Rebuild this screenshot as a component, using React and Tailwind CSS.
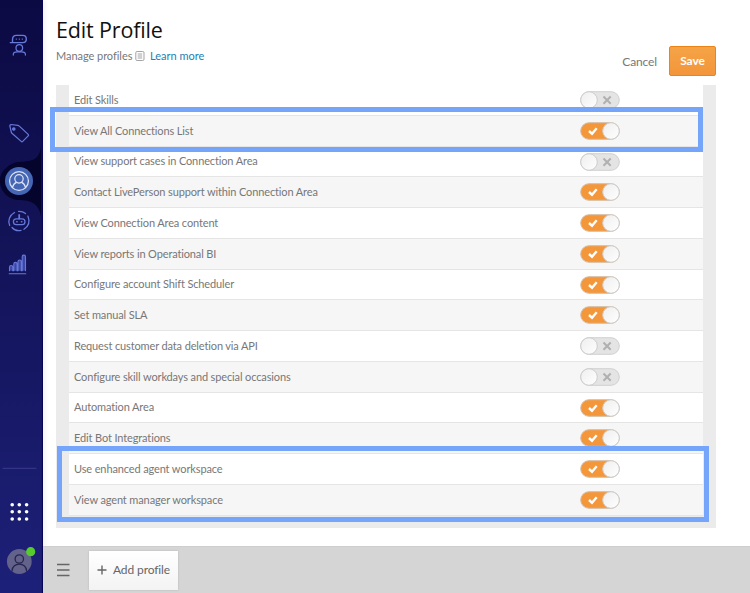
const permissions = [
  ['Edit Skills', false],
  ['View All Connections List', true],
  ['View support cases in Connection Area', false],
  ['Contact LivePerson support within Connection Area', true],
  ['View Connection Area content', true],
  ['View reports in Operational BI', true],
  ['Configure account Shift Scheduler', true],
  ['Set manual SLA', true],
  ['Request customer data deletion via API', false],
  ['Configure skill workdays and special occasions', false],
  ['Automation Area', true],
  ['Edit Bot Integrations', true],
  ['Use enhanced agent workspace', true],
  ['View agent manager workspace', true],
];

function Toggle({ on }) {
  return (
    <svg width="40" height="18" viewBox="0 0 40 18" className="block shrink-0">
      <defs>
        <linearGradient id="knob" x1="0" y1="0" x2="1" y2="1">
          <stop offset="0" stopColor="#eeeeee" />
          <stop offset="1" stopColor="#ffffff" />
        </linearGradient>
      </defs>
      <rect x="0.7" y="0.7" width="38.6" height="16.6" rx="8.3" fill={on ? '#f4973a' : '#e4e4e4'} stroke={on ? '#d4bda5' : '#d0d0d0'} />
      <circle cx={on ? 31 : 9} cy="9" r="8.3" fill="url(#knob)" stroke="#cdcdcd" />
      {on ? (
        <path d="M9 9l3 2.7 4.7-5.5" fill="none" stroke="#fff" strokeWidth="2.4" />
      ) : (
        <path d="M23.5 5.5l7.2 7.2M30.7 5.5l-7.2 7.2" fill="none" stroke="#b0b0b0" strokeWidth="2" />
      )}
    </svg>
  );
}

function Sidebar() {
  return (
    <nav className="h-full w-[43px] shrink-0 bg-linear-to-b from-[#0c0a43] to-[#1d2078] shadow-[2px_0_5px_rgba(0,0,0,0.06)]">
      <svg width="43" height="593" viewBox="0 0 43 593" fill="none" stroke="#6678d8" strokeWidth="1.25" strokeLinecap="round" strokeLinejoin="round">
        <path d="M42.5 0V593" stroke="#080557" />
        <path d="M41 147C39 161 31 161 20 162C11 162 0 170 0 181C0 192 9 200 20 200C31 200 39 204 41 216Z" fill="#04042c" stroke="none" />
        <g>
          <path d="M10.3 42.6h12.4c4.8 0 4.8-7.2 0-7.2h-6.4c-3.2 0-3.8 2-3.8 4.4v2.6" strokeWidth="1.4" />
          <path d="M16.2 39h.2M19.2 39h.2M22.2 39h.2" />
          <circle cx="19.3" cy="48" r="3.3" />
          <path d="M13.3 55v-.6c0-2 1.2-2.6 3.8-2.6h4.6c2.6 0 3.7.6 3.7 2.6v.6" />
        </g>
        <path d="M9.8 125.8c0-.8.5-1.3 1.3-1.3l6.8.8c.7.1 1 .4 1.4.8l8.9 8.3c.5.5.5 1 0 1.5l-5.5 5.5c-.5.5-1 .5-1.5 0l-9-7.9c-.5-.4-.8-.8-.9-1.4Z" />
        <circle cx="13.8" cy="129" r="1.2" fill="#6678d8" />
        <circle cx="19" cy="181" r="14" fill="#4566b5" stroke="none" />
        <g stroke="#dce4f5">
          <circle cx="19" cy="181" r="9.4" />
          <circle cx="19" cy="178.8" r="4.2" />
          <path d="M12.4 187.6c.8-3 2.1-4.4 4-5.2M25.6 187.6c-.8-3-2.1-4.4-4-5.2" />
        </g>
        <g>
          <path d="M14.5 212.5c-5 2.8-7 8-4.8 13M12 227.5c2.5 3 6 3.5 9 2.9M24 229.3c4.8-3 6-8 3.9-13.2M25.5 213.5c-2-1.7-4.5-2.3-7-2.2" />
          <rect x="13.4" y="218.8" width="11.6" height="5.8" rx="2.9" />
          <path d="M19.2 218.5v-3.5" strokeWidth="1.8" />
          <path d="M16.8 221.7h.3M21.5 221.7h.3" strokeWidth="1.6" />
        </g>
        <g strokeWidth="1.1">
          <path d="M9.2 273.7h16.5" />
          <g fill="#3c47a5">
            <path d="M9.5 270.8v-3.6c0-2.2 3.3-2.2 3.3 0v3.6M13.8 270.8v-6.8c0-2.2 3.3-2.2 3.3 0v6.8M18 270.8v-9.2c0-2.2 3.3-2.2 3.3 0v9.2M22.2 270.8v-14c0-2.2 3.3-2.2 3.3 0v14" />
          </g>
        </g>
        <path d="M3 468.3H36" stroke="#5a50a0" strokeWidth="0.8" opacity="0.7" />
        <g fill="#fff" stroke="none">
          {[504.7, 511.8, 519].map((y) => [12.2, 19.3, 26.6].map((x) => <circle key={`${x}-${y}`} cx={x} cy={y} r="1.8" />))}
        </g>
        <circle cx="19.3" cy="561.5" r="12.4" fill="#62628a" stroke="none" />
        <g stroke="#25254f" strokeWidth="1.3">
          <circle cx="19.3" cy="559" r="4.2" />
          <path d="M12 571c.3-9.2 14.3-9.2 14.6 0" />
        </g>
        <circle cx="30.7" cy="551.7" r="4.6" fill="#55cb2d" stroke="none" />
      </svg>
    </nav>
  );
}

export default function App() {
  return (
    <div className="relative flex h-[593px] w-[750px] overflow-hidden bg-white font-['Lato',sans-serif] text-[11px] tracking-[-0.13px] text-[#777]">
      <Sidebar />
      <main className="flex min-w-0 flex-1 flex-col">
        <header className="flex h-[85px] shrink-0 pl-[13px] pr-[34px]">
          <div className="flex-1">
            <h1 className="mt-[16px] font-['Open_Sans',sans-serif] text-[21.5px] leading-[28px] tracking-[-0.15px] text-[#111]">Edit Profile</h1>
            <div className="mt-[4px] flex items-center leading-4">
              <span className="w-[75px] whitespace-nowrap tracking-[-0.05px]">Manage profiles</span>
              <svg className="ml-1" width="10" height="10" viewBox="0 0 10 10" fill="none" stroke="#999" strokeWidth="0.9">
                <rect x="0.8" y="0.5" width="8.2" height="9" rx="1.3" />
                <path d="M2.7 3h4.5M2.7 5h4.5M2.7 7h4.5" />
              </svg>
              <a className="ml-[5px] tracking-normal text-[#2381b5]">Learn more</a>
            </div>
          </div>
          <div className="mt-[46px] flex h-[30px] items-center gap-3 text-[12px]">
            <button className="pt-[2px]">Cancel</button>
            <button className="h-[30px] w-[47px] rounded-[2px] border border-[#ed8417] bg-linear-to-b from-[#f5a346] to-[#f3953b] font-bold text-white">Save</button>
          </div>
        </header>
        <section className="ml-[13px] h-[443px] w-[660px] shrink-0 bg-[#ebebeb] px-[13px]">
          <div className="h-[431px] bg-white">
            {permissions.map(([label, on]) => (
              <div key={label} className="flex h-[30.75px] items-center border-b border-[#e5e5e5] bg-white pt-[0.5px] pl-[5px] even:bg-[#f6f6f6]">
                <span className="w-[506px] whitespace-nowrap">{label}</span>
                <Toggle on={on} />
              </div>
            ))}
          </div>
        </section>
        <footer className="mt-auto flex h-[47px] shrink-0 items-center border-t border-[#cecece] bg-[#d5d5d5] pl-[14px]">
          <svg width="13" height="14" viewBox="0 0 13 14" stroke="#666" strokeWidth="1.3">
            <path d="M0 1.5h12.5M0 7h12.5M0 12.5h12.5" />
          </svg>
          <button className="ml-[19px] flex h-[39px] w-[89px] items-center justify-center gap-[6px] bg-linear-to-b from-white to-[#f3f3f3] text-[12px] tracking-[-0.1px] text-[#666] shadow-[0_0_2px_rgba(0,0,0,0.15)]">
            <svg width="10" height="10" viewBox="0 0 10 10" stroke="#666" strokeWidth="1.4"><path d="M0.5 5h9M5 0.5v9" /></svg>
            <span className="whitespace-nowrap">Add profile</span>
          </button>
        </footer>
      </main>
      <div className="pointer-events-none absolute left-[50px] top-[107px] h-[45px] w-[653px] border-[5px] border-[#74a5fb]" />
      <div className="pointer-events-none absolute left-[57px] top-[446px] h-[76px] w-[652px] border-[5px] border-[#74a5fb]" />
    </div>
  );
}
